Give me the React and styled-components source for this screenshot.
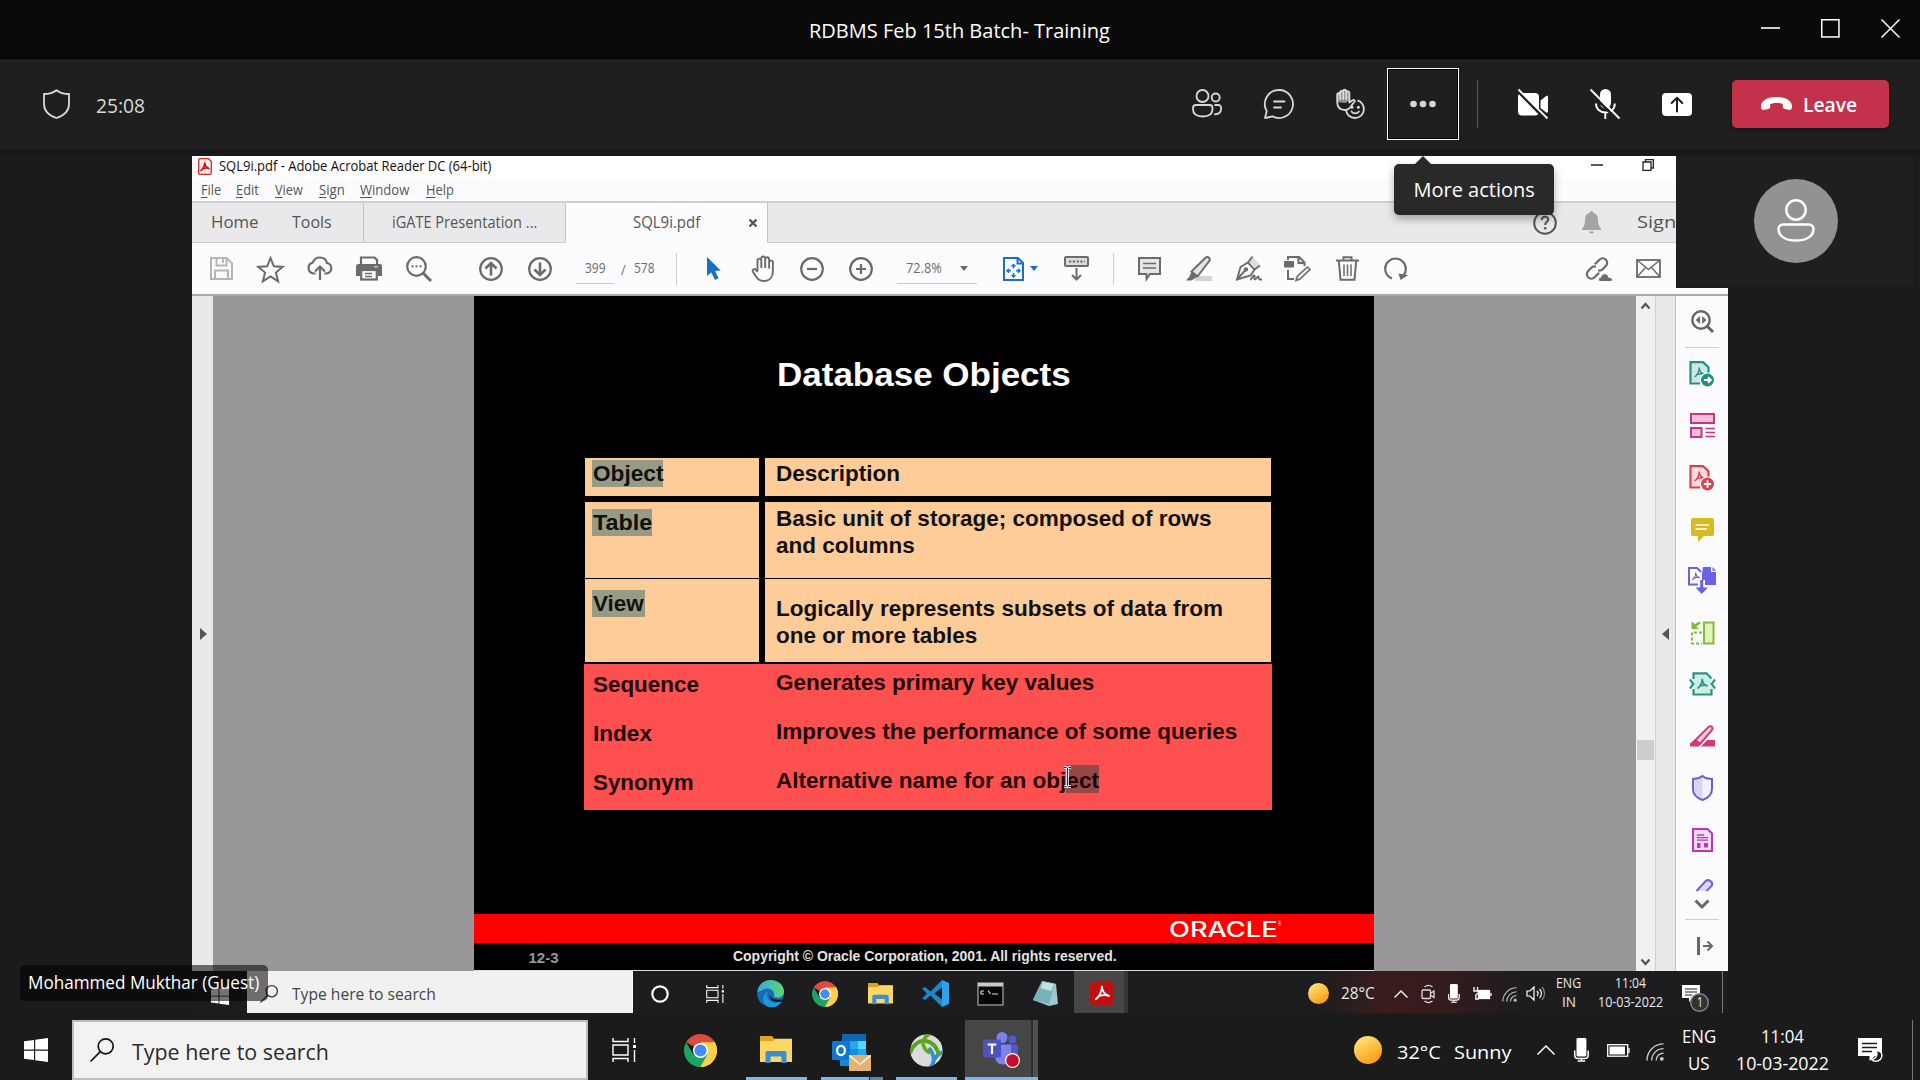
import React, { useLayoutEffect, useRef, useState } from "react";
import styled, { createGlobalStyle, css } from "styled-components";

const UI = '"Open Sans", "Noto Sans", sans-serif';
const ARIAL = '"Liberation Sans", Arial, sans-serif';

const Global = createGlobalStyle`
  * { box-sizing: border-box; }
  html, body { margin: 0; background: #1b1b1b; overflow: hidden; }
  body { font-family: ${UI}; color: #fff; }
  svg { display: block; flex: none; overflow: visible; }
`;

/* ---------- text ---------- */

const Label = styled.span`
  display: block;
  flex: none;
  width: ${(p) => p.$w}px;
  font-family: ${(p) => p.$font || UI};
  font-size: ${(p) => p.$size}px;
  font-weight: ${(p) => p.$weight || 400};
  line-height: ${(p) => (p.$lh ? `${p.$lh}px` : 1.2)};
  color: ${(p) => p.$color || "inherit"};
  white-space: pre;
  margin-left: ${(p) => p.$ml || 0}px;
  margin-top: ${(p) => p.$mt || 0}px;
`;
const LabelInner = styled.span`
  display: inline-block;
  transform-origin: 0 50%;
  u { text-decoration-thickness: 1px; text-underline-offset: 2px; }
`;

function Text({ w, size, weight, color, font, lh, ml, mt, children }) {
  const ref = useRef(null);
  const [scale, setScale] = useState(1);
  useLayoutEffect(() => {
    const natural = ref.current.offsetWidth;
    if (natural) setScale(w / natural);
  }, [w, size]);
  return (
    <Label $w={w} $size={size} $weight={weight} $color={color} $font={font} $lh={lh} $ml={ml} $mt={mt}>
      <LabelInner ref={ref} style={{ transform: `scaleX(${scale})` }}>{children}</LabelInner>
    </Label>
  );
}

/* ---------- icons ---------- */

const Svg = ({ w, h, vb, sw = 1.5, children, ...rest }) => (
  <svg width={w} height={h} viewBox={vb || `0 0 ${w} ${h}`} fill="none" stroke="currentColor" strokeWidth={sw} {...rest}>
    {children}
  </svg>
);

const Shield = () => (
  <Svg w={27} h={30} sw={1.8}>
    <path d="M13.5 1.2C10 4 5.5 5 1 5v10c0 7 5 11.500 12.500 14 7.500-2.500 12.500-7 12.500-14V5C21.500 5 17 4 13.500 1.200Z" strokeLinejoin="round" />
  </Svg>
);
const People = () => (
  <Svg w={30} h={30} sw={1.8}>
    <circle cx="10.500" cy="7" r="6" /><circle cx="23.700" cy="8.500" r="4" />
    <path d="M4 16h13.500a3 3 0 0 1 3 3v1c0 5-4 7.500-9.700 7.500S1 25 1 20v-1a3 3 0 0 1 3-3Z" />
    <path d="M22.500 16h4a2.600 2.600 0 0 1 2.600 2.600v1.200c0 3.800-2.600 5.700-7 5.600" />
  </Svg>
);
const Chat = () => (
  <Svg w={30} h={30} sw={1.8}>
    <path d="M15 1a14 14 0 1 1-6.500 26.400L1.100 29l1.600-7A14 14 0 0 1 15 1Z" strokeLinejoin="round" />
    <path d="M10 12.500h10.500M10 18.500h7" strokeLinecap="round" />
  </Svg>
);
const Reactions = () => (
  <Svg w={30} h={30} sw={1.8}>
    <path d="M1.200 13V6.500a1.500 1.500 0 0 1 3-3 1.500 1.500 0 0 1 3-1.300 1.500 1.500 0 0 1 3 0 1.500 1.500 0 0 1 3 1.800v8L9 14Z" fill="#8f8f8f" stroke="none" />
    <path d="M1.200 13V6a1.500 1.500 0 0 1 3 0V10M4.200 8V3.500a1.500 1.500 0 0 1 3 0V10M7.200 8V2.200a1.500 1.500 0 0 1 3 0V10M10.200 4a1.500 1.500 0 0 1 3.200 0v9.500l3.300-2.300c1.200-.6 2.600.4 2 1.400-3.200 2.400-3.700 8.400-9.500 8.400-5 0-8-3-8-8" strokeLinecap="round" strokeLinejoin="round" />
    <path d="M21.500 11.400a9 9 0 1 1-11.500 9.800" />
    <path d="M15.500 22.500c1.800 2.600 5.600 2.600 7.400 0" strokeLinecap="round" />
    <g fill="currentColor" stroke="none"><circle cx="16" cy="18.300" r="1.500" /><circle cx="22.400" cy="18.300" r="1.500" /></g>
  </Svg>
);
const Dots = () => (
  <Svg w={26} h={8} stroke="none"><g fill="#d6d6d6"><circle cx="3.500" cy="4" r="3.300" /><circle cx="13" cy="4" r="3.300" /><circle cx="22.500" cy="4" r="3.300" /></g></Svg>
);
const CameraOff = () => (
  <Svg w={30} h={30} stroke="none">
    <path fill="#fff" d="M4 4h13a4 4 0 0 1 4 4v14.500a4 4 0 0 1-4 4H4a4 4 0 0 1-4-4V8a4 4 0 0 1 4-4ZM22.500 11.500l5.700-4.500c.8-.6 1.800-.2 1.800.8v14.800c0 1-1 1.400-1.800.8l-5.700-4.500Z" />
    <path d="M-1 1.500 28 31" stroke="#1f1f1f" strokeWidth="2.500" /><path d="M.5.500 29.500 29.500" stroke="#fff" strokeWidth="1.900" />
  </Svg>
);
const MicOff = () => (
  <Svg w={30} h={30} stroke="none">
    <rect x="10" y="0" width="11" height="19.500" rx="5.500" fill="#fff" />
    <path d="M6 14.500c0 5.500 4 9 9.500 9s9.300-3.500 9.300-9M15.300 23.500V30" stroke="#fff" strokeWidth="1.900" />
    <path d="M-1 2.500 27.500 31" stroke="#1f1f1f" strokeWidth="2.500" /><path d="M.5.500 29.500 29.500" stroke="#fff" strokeWidth="1.900" />
  </Svg>
);
const Share = () => (
  <Svg w={30} h={23} stroke="none">
    <rect width="30" height="23" rx="4" fill="#fff" />
    <path d="M15 18.500V5M9.700 10 15 4.800 20.300 10" stroke="#1f1f1f" strokeWidth="2" strokeLinecap="round" strokeLinejoin="round" />
  </Svg>
);
const Hangup = () => (
  <Svg w={31} h={14} stroke="none">
    <path fill="#fff" d="M15.500 0C23.500 0 31 3.200 31 9.200c0 3.400-1.500 4-3.500 3.600l-3.700-.8c-1.400-.3-2-1.200-2-2.500V7c-3.500-1.500-9-1.500-12.600 0v2.500c0 1.300-.6 2.200-2 2.500l-3.700.8C1.500 13.200 0 12.600 0 9.200 0 3.200 7.500 0 15.500 0Z" />
  </Svg>
);
const WinMin = () => <Svg w={19} h={19} sw={1.600}><path d="M0 9h19" /></Svg>;
const WinMax = () => <Svg w={19} h={19} sw={1.500}><rect x=".75" y=".75" width="17.200" height="17.200" /></Svg>;
const WinClose = () => <Svg w={19} h={19} sw={1.500}><path d="m.5.500 18 18M18.500.500l-18 18" /></Svg>;

const AcroMark = ({ x = 0, y = 0, s = 1, c = "currentColor", sw = 1.500 }) => (
  <path transform={`translate(${x} ${y}) scale(${s})`} stroke={c} strokeWidth={sw} fill="none" strokeLinejoin="round" strokeLinecap="round"
    d="M5 .5C4.700 4 3.500 7.500.5 9.500M5 .5c.2 3 1.600 5.500 5 6.500M2.500 7.300C5 6.400 7.500 6.200 10 7" />
);

const Save = () => (
  <Svg w={23} h={23} stroke="#b5b5b5" sw={2}><path d="M1 1h15.500L22 6.500V22H1Z" /><path d="M6.500 1v7.500h10V1M13 2v4M5 22v-8.500h13V22" /></Svg>
);
const Star = () => <Svg w={27} h={26} sw={2}><path d="m13.500 2 3.300 8.300 8.900.6-6.800 5.700 2.200 8.700-7.600-4.800-7.600 4.800 2.200-8.700L1.300 10.900l8.900-.6Z" /></Svg>;
const CloudUp = () => (
  <Svg w={26} h={25} sw={2.200}><path d="M8.500 17.500H6.800a5.600 5.600 0 0 1-1-11C7 3.200 9.700 1.500 12.800 1.500c3.600 0 6.400 2.200 7.200 5.500a5.300 5.300 0 0 1-.7 10.500h-2" /><path d="M13 24V11M8 15.500l5-5 5 5" /></Svg>
);
const Print = () => (
  <Svg w={26} h={25} stroke="none">
    <path d="M5 8V1.500h13.500L21 4v4" stroke="currentColor" strokeWidth="2.200" /><path fill="currentColor" d="M2.500 8h21A2.500 2.500 0 0 1 26 10.500V20h-4v-5H4v5H0v-9.500A2.500 2.500 0 0 1 2.500 8Z" />
    <rect x="5.200" y="14" width="15.600" height="9.500" stroke="currentColor" strokeWidth="2.200" fill="#fff" /><path d="M9 17.500h7M9 20.500h7" stroke="currentColor" strokeWidth="1.300" /><path d="M18 10.800h4" stroke="#ddd" strokeWidth="1.200" />
  </Svg>
);
const Find = () => (
  <Svg w={26} h={26} sw={2.200}><circle cx="10.500" cy="10.500" r="9.300" /><path d="m17 17 8 8" strokeWidth="3" /><path d="M5.500 10.200h10" strokeDasharray="2 2" strokeWidth="2" /></Svg>
);
const RoundArrow = ({ down }) => (
  <Svg w={24} h={24} sw={2.200}><circle cx="12" cy="12" r="10.800" /><path d={down ? "M12 5.500V18M6.500 12.500l5.500 5.500 5.500-5.500" : "M12 18.500V6M6.500 11.500 12 6l5.500 5.500"} strokeWidth="2.600" /></Svg>
);
const Pointer = () => <Svg w={14} h={23} stroke="none"><path fill="#1b6fc4" d="M0 0v19l4.300-3.600L8 23l3.600-1.700-3.500-7.200 5.600-.6Z" /></Svg>;
const Hand = () => (
  <Svg w={25} h={27} sw={1.900}>
    <path d="M6.500 16V5.500a1.900 1.900 0 0 1 3.800 0V13m0-9.500a1.900 1.900 0 0 1 3.900 0V13m0-8.800a1.900 1.900 0 0 1 3.900 0V13.500m0-6a1.900 1.900 0 0 1 3.800 0V16c0 6-3 10-8.700 10-6 0-7.200-3-11-8.800-1.600-2.400.9-4.300 2.800-2.300L6.500 17" strokeLinejoin="round" />
  </Svg>
);
const Zoom = ({ plus }) => <Svg w={24} h={24} sw={2.200}><circle cx="12" cy="12" r="10.800" /><path d={plus ? "M7 12h10M12 7v10" : "M7 12h10"} /></Svg>;
const FitPage = () => (
  <Svg w={21} h={24} stroke="#1b6fc4" sw={2}><path d="M1 1h14l5 5v17H1Z" /><path d="M14.500 1v5.500H20" /><path d="M10.500 7.500v4M8.500 9.500l2-2 2 2M10.500 20v-4M8.500 18l2 2 2-2M4 13.700h4M6 11.700l-2 2 2 2M17 13.700h-4M15 11.700l2 2-2 2" strokeWidth="1.400" /></Svg>
);
const Caret = ({ c = "currentColor" }) => <Svg w={8} h={5} stroke="none"><path fill={c} d="M0 0h8L4 5Z" /></Svg>;
const ScrollDown = () => (
  <Svg w={25} h={25} sw={2}><rect x="1" y="1" width="23" height="9" rx="1" fill="#ddd" /><path d="M5 5.500h16" strokeDasharray="2.200 1.600" /><path d="M12.500 12v11.500M8 19l4.500 4.500L17 19" /></Svg>
);
const Comment = () => <Svg w={23} h={24} sw={2}><path d="M1 1h21v16h-10l-3.500 5v-5H1Z" fill="#e6e6e6" /><path d="M5 6.500h13M5 11h13" strokeWidth="1.500" /></Svg>;
const Highlight = () => (
  <Svg w={26} h={25} sw={1.900}><path d="M10 20h16v5H8Z" fill="#d4d4d4" stroke="none" /><path d="M5.500 15.500 19.500 1.800c1-1 2.500-1 3.500-.1s1 2.300.2 3.400L11.500 20.500Z" fill="#e4e4e4" /><path d="M5.500 15.500 3.500 20.500 0 24.500h5.500l6-4Z" fill="currentColor" stroke="none" /></Svg>
);
const Sign = () => (
  <Svg w={26} h={25} sw={1.900}><path d="M13 5.500 17 1l6.500 7.500-4 3.500Z" fill="#ddd" stroke="none" /><path d="M1 23.500 4.500 11l7.500-4.500 6.500 7-4 6Z" /><path d="M1 23.500 9 14.500" /><circle cx="10" cy="13.500" r="1.200" fill="currentColor" /><path d="M12 6.500 16.500 .5M18.500 13.500l5.500-4" /><path d="M14 23.500c2 0 2.500-4 4-4s-.5 4 1 4 2-3 3.200-3 0 3 1.300 3h2.500" /></Svg>
);
const EditDoc = () => (
  <Svg w={27} h={26} sw={2}><path d="M4 4V1h11l5.500 5.500V10M14.500 1v6h6M4 14v9h6" /><rect x="0" y="5" width="10" height="6.500" fill="currentColor" stroke="none" /><path d="m12 24.500 1.500-4.500L23.500 11l2.500 2.500L16 23Z" fill="#eee" strokeWidth="1.600" /></Svg>
);
const Trash = () => (
  <Svg w={23} h={25} sw={2}><path d="M0 4.500h23M7.500 4V1.200h8V4M2.800 4.500 4.500 23.800h14L20.200 4.500" /><path d="M8 8.500v11.500M11.500 8.500v11.500M15 8.500v11.500" strokeWidth="1.500" /></Svg>
);
const Rotate = () => <Svg w={25} h={23} sw={2.200}><path d="M8 21.500C3.500 19.500 1.200 16 1.200 11.800a10.300 10.300 0 0 1 20.600 0c0 2.500-.8 4.700-2 6.200" /><path d="m14.500 16.500 10 1.500-8 5Z" fill="currentColor" stroke="none" /></Svg>;
const Link = () => (
  <Svg w={27} h={26} sw={2.200}><g transform="translate(11 12.500) rotate(-45)"><path d="M1.500 -4.500H8a4.500 4.500 0 0 1 0 9H3.500A4.500 4.500 0 0 1 -.5 2" /><path d="M-1.500 4.500H-8a4.500 4.500 0 0 1 0-9H-3.500A4.500 4.500 0 0 1 .5-2" /></g><path d="M14.500 25.500c-3-.5-2.500-4 .2-4.300 1-4.700 7.300-4.400 8 0 4.500 0 4.500 4 2 4.300Z" fill="currentColor" stroke="#fcfcfe" strokeWidth="1" /></Svg>
);
const Mail = () => <Svg w={25} h={19} sw={1.800}><rect x="1" y="1" width="23" height="17" /><path d="m1 1 11.500 9.500L24 1M1 18l8.500-9.500M24 18l-8.500-9.500" strokeWidth="1.400" /></Svg>;
const Help = () => (
  <Svg w={24} h={24} sw={2}><circle cx="12" cy="12" r="10.800" /><path d="M8.800 9c.2-4.500 6.700-4 6.400-.3-.2 2.200-3 2.300-3 5.300" /><circle cx="12.200" cy="17.200" r="1.300" fill="currentColor" stroke="none" /></Svg>
);
const Bell = () => <Svg w={19} h={23} stroke="none"><path fill="#a3a3a3" d="M9.500 0c1 0 1.500.7 1.500 1.600 3.300.8 5 3.500 5 7 0 4.600.8 6.900 3 9.200v1.200H0v-1.200c2.200-2.300 3-4.600 3-9.200 0-3.500 1.700-6.200 5-7C8 .7 8.500 0 9.500 0ZM7 20.500h5c-.3 2.700-4.700 2.700-5 0Z" /></Svg>;
const TriLeft = () => <Svg w={7} h={12} stroke="none"><path fill="#555" d="M7 0v12L0 6Z" /></Svg>;
const TriRight = () => <Svg w={7} h={12} stroke="none"><path fill="#555" d="M0 0v12l7-6Z" /></Svg>;
const Chevron = ({ w = 9, h = 6, up, sw = 2.200 }) => <Svg w={w} h={h} sw={sw}><path d={up ? `M.5 ${h - 0.5} ${w / 2} 1 ${w - 0.5} ${h - 0.5}` : `M.5 .5 ${w / 2} ${h - 1} ${w - 0.5} .5`} /></Svg>;

const RailFind = () => (
  <Svg w={23} h={23} stroke="#666" sw={2.400}><circle cx="10" cy="10" r="8.700" /><path d="m16 16 6 6" strokeWidth="3" /><path d="M9 6v8L4.800 10ZM11.200 6v8l4.200-4Z" fill="#666" stroke="none" /></Svg>
);
const DocBadge = ({ c, fill, plus }) => (
  <Svg w={26} h={26} stroke={c} sw={2.200}>
    <path d="M1.500 22.500V1.200H14l5.500 5v14l-8 2.300Z" fill={fill} stroke="none" /><path d="M11 22.500H1.500V1.200H14l5.500 5V12" /><AcroMark x={5.500} y={6.500} s={0.95} c={c} />
    <circle cx="18.500" cy="19" r="7.500" fill="#fff" stroke="none" /><circle cx="18.500" cy="19" r="6.500" fill={c} stroke="none" />
    <path d={plus ? "M14.800 19h7.400M18.500 15.300v7.400" : "M15 19h6.500M19 16.200l2.800 2.800L19 21.800"} stroke="#fff" strokeWidth="2" />
  </Svg>
);
const Organize = () => (
  <Svg w={25} h={25} stroke="#c43487" sw={2}><rect x="1" y="1" width="23" height="9" fill="#f3bfdc" /><rect x="1" y="15" width="10.500" height="9" fill="#f3bfdc" /><path d="M15.500 15.500H25M15.500 19.500H25M15.500 23.500H25" strokeWidth="1.300" /></Svg>
);
const RailComment = () => <Svg w={23} h={24} stroke="none"><path fill="#d5bb1f" d="M2 0h19a2 2 0 0 1 2 2v14a2 2 0 0 1-2 2h-8l-6 6v-6H2a2 2 0 0 1-2-2V2a2 2 0 0 1 2-2Z" /><path d="M4.500 7H18M4.500 11H16" stroke="#fff" strokeWidth="1.700" /></Svg>;
const Combine = () => (
  <Svg w={28} h={27} stroke="#6a5fdc" sw={2}><path d="M10 17.500H1V1h8l4 4" fill="#fff" /><AcroMark x={4} y={5.500} s={0.75} c="#6a5fdc" /><path d="M15 0h8v5h5v13H17v-5h-3V7Z" fill="#6762e6" stroke="none" /><path d="M24.500 0v3.800H28Z" fill="#6762e6" stroke="none" /><path d="M13.700 13v8" strokeWidth="3" /><path d="M7.500 20.500h12.500L13.700 27Z" fill="#6a5fdc" stroke="none" /></Svg>
);
const Compare = () => (
  <Svg w={25} h={25} stroke="#83bd35" sw={2}><rect x="14" y="2.500" width="9.500" height="21" fill="#dff2bd" /><path d="M12 12.500H2V23.500h10" strokeDasharray="3 2" /><path d="M1.500 1.500v7.500H9L6.500 6.500l4.500-3.500L9 1.500 5 4Z" fill="#83bd35" stroke="none" /></Svg>
);
const Compress = () => (
  <Svg w={27} h={24} stroke="#2b9383" sw={2.200}><path d="M5 2h12l5 4.500V22H5Z" fill="#cdeee7" stroke="none" /><path d="M4.500 7V1.300h13L22.500 6.500M4.500 17v5.500h18V17M1 7.500 4.300 12 1 16.500M26 7.500 22.700 12l3.300 4.500" /><AcroMark x={8.500} y={7} s={0.95} c="#2b9383" sw={1.800} /></Svg>
);
const Redact = () => (
  <Svg w={25} h={22} stroke="#cf3a78" sw={2}><path d="M5.500 15 18.500 2c2.500-2 5 .5 3.500 3L10 19Z" fill="#f9d5e3" /><path d="M0 21.500v-3l4.500-4 6 5-1.500 2ZM11 21.500 17 15h8v6.500Z" fill="#cf3a78" stroke="none" /></Svg>
);
const RailShield = () => (
  <Svg w={21} h={26} stroke="#6a5fd6" sw={2}><path d="M10.500 1C8 3 4.500 4 1 4v10c0 5.500 4 9 9.500 11 5.500-2 9.500-5.500 9.500-11V4C16.500 4 13 3 10.500 1Z" fill="#f3f2fc" /><path d="M10.500 3C8 4.500 5 5 2.300 5.200V14c0 4.500 3.200 7.500 8.200 9.500Z" fill="#d8d6ee" stroke="none" /></Svg>
);
const Prepare = () => (
  <Svg w={21} h={24} stroke="#b338b8" sw={2}><path d="M1 1h14.500L20 5.500V23H1Z" fill="#f5dcf5" /><path d="M5 7h7M5 9.700h11M5 12.200h11" strokeWidth="1.300" /><path d="M5 15h3.500v5H5ZM12 15h4v4.500h-4Z" fill="#b338b8" stroke="none" /></Svg>
);
const PenTop = () => <Svg w={18} h={12} stroke="#7166cf" sw={2}><path d="M1.500 12 10.500 2.200c2.500-2.500 8 .3 6.500 4.300L11.500 12" fill="#d9d6f5" /></Svg>;
const Expand = () => <Svg w={16} h={18} stroke="#666" sw={2}><path d="M1.500 0v18" strokeWidth="3" /><path d="M6 9h9M10.500 4.500 15 9l-4.500 4.500" /></Svg>;

const AcroApp = () => <Svg w={14} h={17} stroke="#d3292f" sw={1.300}><path d="M2 .7h8.500L13.300 3.500V15a1.300 1.300 0 0 1-1.300 1.300H2A1.300 1.300 0 0 1 .7 15V2A1.300 1.300 0 0 1 2 .7Z" fill="#fdeeee" /><AcroMark x={2.500} y={4.500} s={0.85} c="#c11" sw={1.900} /></Svg>;
const Winlogo = ({ s }) => <Svg w={s} h={s} vb="0 0 24 24" stroke="none"><path fill="#fff" d="M0 3.300 10 2v9.500H0ZM11.200 1.800 24 0v11.500H11.200ZM0 12.700h10V22L0 20.700ZM11.200 12.700H24V24l-12.800-1.800Z" /></Svg>;
const SearchGlyph = ({ s, c }) => <Svg w={s} h={s} vb="0 0 24 24" stroke={c} sw={1.700}><circle cx="15.700" cy="8.300" r="7.500" /><path d="M10.300 13.700.5 23.500" /></Svg>;
const TaskView = ({ s }) => <Svg w={s} h={s} vb="0 0 24 24" stroke="#fff" sw={1.400}><path d="M1 0v3.500h15V0M1 24v-3.500h15V24M1 7h15v10H1ZM22.500 0v5M22.500 12v12" /><path d="M21 7h3v3h-3Z" fill="#fff" stroke="none" /></Svg>;
const Chrome = ({ s }) => (
  <Svg w={s} h={s} vb="0 0 34 34" stroke="none">
    <path fill="#dd4b3e" d="M17 17 2.300 8.500a17 17 0 0 1 29.400 0Z" /><path fill="#fdd04b" d="M17 17V8.500h14.700A17 17 0 0 1 17 34Z" /><path fill="#1da362" d="M17 17 9.600 21.200 2.300 8.500A17 17 0 0 0 17 34l7.300-12.700Z" />
    <path fill="#fdd04b" d="M17 34 24.300 21.200 24 13 30 8.500h1.700A17 17 0 0 1 17 34Z" /><circle cx="17" cy="17" r="7.800" fill="#fff" /><circle cx="17" cy="17" r="6.200" fill="#4a89f3" />
  </Svg>
);
const Folder = ({ s }) => (
  <Svg w={s} h={s * 0.85} vb="0 0 32 27" stroke="none"><path fill="#e3a11b" d="M0 0h12l2.500 3H30v6H0Z" /><path fill="#fdd663" d="M0 5h13l2-2.300h17V26H0Z" /><path fill="#3b8ed0" d="M5.500 27V17a2 2 0 0 1 2-2h17a2 2 0 0 1 2 2v10h-5v-6.500h-11V27Z" /></Svg>
);
const Outlook = () => (
  <Svg w={39} h={38} stroke="none"><rect x="10" y="0" width="24" height="9" fill="#1066b5" /><rect x="10" y="7" width="8" height="9" fill="#1490df" /><rect x="18" y="7" width="8" height="9" fill="#28a8ea" /><rect x="26" y="7" width="8" height="9" fill="#50d9ff" /><rect x="10" y="15" width="8" height="9" fill="#0a4f94" /><rect x="18" y="15" width="8" height="9" fill="#1490df" /><rect x="26" y="15" width="8" height="9" fill="#28a8ea" /><path d="M8 32V20l12 7 15-8v10l-3 3Z" fill="#1589d8" />
    <rect x="0" y="7" width="18" height="19" rx="1.500" fill="#0f78d4" /><ellipse cx="9" cy="16.500" rx="3.900" ry="4.600" stroke="#fff" strokeWidth="2.300" />
    <rect x="17" y="21" width="22" height="16" fill="#e6b272" /><path d="m17.500 21.500 10.500 9 10.500-9" stroke="#fff" strokeWidth="1.300" /></Svg>
);
const Globe = () => (
  <Svg w={33} h={33} stroke="none">
    <defs><clipPath id="globeClip"><circle cx="16.500" cy="16.500" r="16.300" /></clipPath></defs>
    <g clipPath="url(#globeClip)">
      <circle cx="16.500" cy="16.500" r="16.300" fill="#d9dcdd" />
      <path d="M20 34C25 29 25 22 19 14M34 18c-5 1-8 4-10 8" stroke="#2f92cf" strokeWidth="3.800" />
      <path d="M0 19C3 11 9 6 16 7c7 1 11 7 13 14" stroke="#55a51c" strokeWidth="4" />
      <path d="M22-1C13 2 11 9 15 15c1.500 2 3 3 5 4" stroke="#63a81d" strokeWidth="3.600" />
    </g>
  </Svg>
);
const TeamsIcon = () => (
  <Svg w={37} h={36} stroke="none"><circle cx="19" cy="5.500" r="5.500" fill="#7b83eb" /><circle cx="29.500" cy="7.500" r="4" fill="#5059c9" /><path d="M25 12.500h10v9a7 7 0 0 1-10 6Z" fill="#5059c9" /><path d="M12 12.500h16v11c0 6-3 9-8 9s-8-3-8-9Z" fill="#7b83eb" /><rect x="0" y="7.500" width="18" height="18" rx="1.500" fill="#4b53bc" /><path d="M4.700 12.500h8.600M9 12.500v9.500" stroke="#fff" strokeWidth="2.200" /><circle cx="29.500" cy="28.500" r="7.500" fill="#fff" /><circle cx="29.500" cy="28.500" r="6.300" fill="#c50f2f" /></Svg>
);
const Edge = () => (
  <Svg w={27} h={27} stroke="none"><defs><linearGradient id="eg" x1="0" y1="0" x2="1" y2="0"><stop offset="0" stopColor="#2fa8e0" /><stop offset="1" stopColor="#5cd96d" /></linearGradient></defs><circle cx="13.500" cy="13.500" r="13.400" fill="#1769be" /><path d="M.3 12C1.500 4 7 0 13.500 0 21 0 27 5 27 11.500c0 4-3 6-6.500 6-2.500 0-4-1-3.500-2.500.7-5-6-8-10.500-5.500C3.500 11 .5 12 .3 12Z" fill="url(#eg)" /><path d="M11 12c-4 8 5 13 14 9.500A13 13 0 0 1 12 27C5 25 4 14 11 12Z" fill="#1c9ade" /><path d="M13 13c-1 5 4 7.500 12.500 6.500l1 1.500c-8 3-16-.5-13.500-8Z" fill="#1d1d1f" /></Svg>
);
const VsCode = () => <Svg w={27} h={27} stroke="none"><path d="M20 0v27L8.500 15.500 3 20 0 18.500 5 13.500 0 8.500 3 7l5.500 4.500Z" fill="#1e86cc" /><path d="M20 7.500v12L12.500 13.500Z" fill="#1d1d1f" /><path d="M20 0 27 3v21l-7 3Z" fill="#2ea3ea" /></Svg>;
const Cmd = () => <Svg w={25} h={22} stroke="none"><rect width="25" height="22" fill="#070707" stroke="#8a8a8a" /><rect x="0" y="0" width="25" height="3.500" fill="#c9c9c9" /><path d="M3 8h3M3 8v3h3M8 8v0M8 11v0M10 7.500l2.500 3.500M14 11h6" stroke="#ddd" strokeWidth="1.200" /></Svg>;
const Notepad = () => <Svg w={25} h={25} stroke="none"><path d="M9 0 23 3l2 20-9 2L0 19Z" fill="#9fc9cd" /><path d="M9 0 22 2.500 16 23 0 19Z" fill="#79b3ba" /><path d="M10 1 21 3l-2.500 7-11-3Z" fill="#c3e0e2" /></Svg>;
const Acrobat = () => <Svg w={24} h={23} stroke="none"><rect width="24" height="23" rx="3" fill="#c00f10" /><AcroMark x={5} y={4} s={1.400} c="#fff" sw={1.300} /></Svg>;
const Sun = ({ s, id }) => <Svg w={s} h={s} vb="0 0 28 28" stroke="none"><defs><linearGradient id={id} x1=".2" y1="0" x2=".8" y2="1"><stop offset="0" stopColor="#ffe67a" /><stop offset="1" stopColor="#fb960a" /></linearGradient></defs><circle cx="14" cy="14" r="14" fill={`url(#${id})`} /></Svg>;
const Mic = ({ h }) => <Svg w={h * 0.62} h={h} vb="0 0 15 24" stroke="#fff"><rect x="2.500" y="0" width="10" height="18.500" rx="1.500" fill="#fff" stroke="none" /><path d="M.7 12.500v4.200C.7 19.500 2 20.500 4 20.500h7c2 0 3.300-1 3.300-3.800v-4.200M7.500 20.500V23M3.700 23.200h7.600" /></Svg>;
const Battery = () => <Svg w={23} h={13} stroke="#fff" sw={1.300}><rect x=".7" y=".7" width="20" height="11.500" /><path d="M22 4v5" /><rect x="2.500" y="2.500" width="15.500" height="8" fill="#fff" stroke="none" /></Svg>;
const BatteryPlug = () => <Svg w={18} h={14} stroke="#fff" sw={1.300}><rect x="5.500" y="3.500" width="11" height="8" fill="#fff" /><path d="M18 6v3M1 0v3.500M4.500 0v3.500M.3 4h5v2L2.800 8V12h3" /></Svg>;
const Wifi = ({ s, c = "#fff" }) => <Svg w={s} h={s} vb="0 0 19 19" stroke={c} sw={1.400}><path d="M1 18.500A17.500 17.500 0 0 1 18.500 1M6 18.500A12.500 12.500 0 0 1 18.500 6M10.700 18.500a7.800 7.800 0 0 1 7.800-7.800" /><circle cx="16.700" cy="16.700" r="2" fill={c} stroke="none" /></Svg>;
const Volume = () => <Svg w={19} h={15} stroke="#fff" sw={1.200}><path d="M1 5h3l4-4v13l-4-4H1ZM11 5c1.300 1.500 1.300 3.500 0 5M13.500 3c2.500 2.500 2.500 6.500 0 9" /><path d="M16 1c3.300 3.500 3.300 9.500 0 13" stroke="#888" /></Svg>;
const Meet = () => <Svg w={14} h={18} stroke="#ddd" sw={1.300}><rect x="1" y="5" width="8.500" height="8.500" rx="1" /><path d="m10 8 3-2v6.500l-3-2M3.500 2C6 0 9 0 11.500 2M3.500 16c2.500 2 5.500 2 8 0" /></Svg>;
const NotifMoon = () => <Svg w={25} h={24} stroke="none"><path d="M0 0h24v18h-7l-5.500 5v-5H0Z" fill="#fff" /><path d="M4 5.500h15M4 9.500h15M4 13.500h10" stroke="#1b1b1c" strokeWidth="1.300" /><path d="M18.500 12.500c4 0 6.500 3 5 7-1.500 4-7 5-10 2 5-.5 6.500-4.500 5-9Z" fill="#1b1b1c" stroke="#fff" strokeWidth="1.300" /></Svg>;
const NotifOne = () => <Svg w={27} h={27} stroke="none"><path d="M0 0h18v13l-7 0-4 4v-4H0Z" fill="#fff" /><path d="M3 4h12M3 7h12M3 10h7" stroke="#1d1d1f" strokeWidth="1.200" /><circle cx="17.500" cy="17.500" r="8.800" fill="#333" stroke="#888" strokeWidth="1.400" /></Svg>;
const Ibeam = () => <Svg w={9} h={22} sw={1}><path d="M1 1.500h2.500l1 1 1-1H8M4.500 2.500v17M1 20.500h2.500l1-1 1 1H8" stroke="#fff" strokeWidth="2.600" /><path d="M1 1.500h2.500l1 1 1-1H8M4.500 2.500v17M1 20.500h2.500l1-1 1 1H8" stroke="#333" /></Svg>;

/* ---------- meeting window ---------- */

const Screen = styled.main`
  width: 1920px; height: 1080px; display: flex; flex-direction: column; background: #1b1b1b; overflow: hidden;
`;
const TitleBar = styled.header`
  height: 59px; background: #0a0a0a; border-bottom: 1px solid #000; display: flex; align-items: flex-start; padding-top: 18px;
`;
const WindowButtons = styled.div`
  display: flex; gap: 41px; margin-left: 651px; padding-top: 1px; color: #fff;
`;
const MeetingBar = styled.nav`
  height: 90px; background: #1f1f1f; display: flex; align-items: center; padding-left: 42.500px; color: #d9d9d9;
`;
const MeetingActions = styled.div`
  display: flex; align-items: center; margin-left: 1026px;
`;
const ActionButton = styled.div`
  width: 72px; height: 72px; display: flex; align-items: center; justify-content: center;
  ${(p) => p.$focused && css`border: 1px solid #fff; box-shadow: inset 0 0 0 1px #000;`}
`;
const ActionDivider = styled.div`
  width: 1px; height: 48px; background: #555; margin: 0 19px 0 18px;
`;
const LeaveButton = styled.div`
  width: 157px; height: 48px; margin-left: 19px; border-radius: 5px; background: #c4314b; color: #fff;
  display: flex; align-items: center; padding-left: 29px; box-shadow: 0 2px 4px rgba(0, 0, 0, 0.3);
`;
const Stage = styled.section`
  position: relative; height: 871px; padding: 7px 0 0 192px; background: #1b1b1b;
  box-shadow: inset 0 7px 0 -1px #181818;
`;
const Tooltip = styled.div`
  position: absolute; left: 1394px; top: 15px; width: 160px; height: 51px; border-radius: 5px; background: #292929;
  display: flex; align-items: center; padding-left: 19.500px; box-shadow: 0 4px 8px rgba(0, 0, 0, 0.3);
  &::before { content: ""; position: absolute; left: 21px; top: -8px; border: 8px solid transparent; border-top: 0; border-bottom-color: #292929; }
`;
const ParticipantTile = styled.div`
  position: absolute; left: 1676px; top: 7px; width: 237px; height: 132px; background: #1f1f1f; border-bottom: 3px solid #1b1b1b;
  display: flex; padding: 22.500px 0 0 77.500px;
`;
const Avatar = styled.div`
  width: 84px; height: 84px; border-radius: 50%; background: #929292; color: #fff; display: flex; justify-content: center; padding-top: 20px;
`;
const NameTag = styled.div`
  position: absolute; left: 20px; top: 816px; width: 248px; height: 36px; border-radius: 5px; background: rgba(0, 0, 0, 0.55);
  display: flex; align-items: center; padding: 0 0 1px 7.500px;
`;

/* ---------- shared Acrobat window ---------- */

const Shared = styled.div`
  width: 1536px; height: 857px; display: flex; flex-direction: column; background: #fcfcfe; color: #555;
`;
const AppTitle = styled.div`
  height: 22px; display: flex; align-items: center; padding: 0 0 2px 5.500px; color: #111; background: #fff;
`;
const AppWindowButtons = styled.div`
  display: flex; align-items: center; gap: 39px; margin: -3px 0 0 1100.500px; color: #222;
`;
const MenuBar = styled.div`
  height: 23px; display: flex; align-items: center; padding-left: 9px;
`;
const TabStrip = styled.div`
  height: 42px; display: flex; background: #e9e9eb; border-top: 2px solid #cfcfd1; width: 1484px;
`;
const Tab = styled.div`
  width: ${(p) => p.$w}px; display: flex; align-items: center; padding-left: ${(p) => p.$pad}px; flex: none;
  border-right: 1px solid #c4c4c6; border-bottom: 1px solid ${(p) => (p.$active ? "#fcfcfe" : "#cbcbcd")};
  background: ${(p) => (p.$active ? "#fcfcfe" : "transparent")};
`;
const TabRest = styled.div`
  flex: 1; display: flex; align-items: center; border-bottom: 1px solid #cbcbcd; padding-left: 764.500px;
`;
const Tools = styled.div`
  height: 53px; display: flex; align-items: center; padding-left: 4.500px; color: #6b6b6b; border-bottom: 2px solid #a9a9ab;
`;
const ToolSlot = styled.div`
  width: 49.400px; height: 27px; flex: none; display: flex; align-items: center; justify-content: center; margin-left: ${(p) => p.$ml || 0}px;
`;
const ToolField = styled.div`
  width: ${(p) => p.$w}px; height: 31px; flex: none; display: flex; align-items: center; padding-left: 9px; border-bottom: 1px solid #c9c9cb; margin-left: 11px;
`;
const ToolDivider = styled.div`
  width: 1px; height: 32px; background: #cfcfd1; flex: none; margin-left: ${(p) => p.$ml}px;
`;
const Workspace = styled.div`
  height: 674px; flex: 1; display: flex; min-height: 0;
`;
const LeftPane = styled.div`
  width: 21px; background: #e9e9eb; display: flex; align-items: center; justify-content: center; padding-left: 1px;
`;
const Canvas = styled.div`
  width: 1423px; background: #999799; display: flex; padding-left: 260.500px;
`;
const ScrollBar = styled.div`
  width: 20px; background: #f1f1f3; border-right: 1px solid #cfcfd1; display: flex; flex-direction: column; align-items: center; color: #555; padding: 7px 0 6px;
`;
const ScrollThumb = styled.div`
  width: 17px; height: 19.500px; background: #cdcdcf; margin: 431px 1px auto 0;
`;
const RightPane = styled.div`
  width: 20px; background: #e9e9eb; border-right: 1px solid #c4c4c6; display: flex; align-items: center; justify-content: center;
`;
const Rail = styled.div`
  width: 52px; display: flex; flex-direction: column; align-items: center; color: #666; background: #fbfbfd;
`;
const RailSlot = styled.div`
  height: ${(p) => p.$h || 51.75}px; flex: none; display: flex; align-items: center; justify-content: center;
  padding-left: ${(p) => p.$pl || 0}px; padding-top: ${(p) => p.$pt || 0}px;
`;
const RailLine = styled.div`
  width: 34px; height: 1px; background: #cfcfd1; flex: none;
`;

/* ---------- slide ---------- */

const Slide = styled.article`
  width: 900px; background: #000; display: flex; flex-direction: column; border-bottom: 1px solid #ddd;
`;
const SlideTitle = styled.div`
  height: 162.300px; padding: 59px 0 0 303px; color: #fff;
`;
const ObjectTable = styled.div`
  width: 686.500px; margin-left: 111px; display: flex; flex-direction: column;
`;
const TableRow = styled.div`
  height: ${(p) => p.$h}px; display: flex; gap: 6px; margin-bottom: ${(p) => p.$gap}px; color: #111;
`;
const Cell = styled.div`
  background: #fdcc98; width: ${(p) => (p.$name ? 174 : 506.5)}px; padding: ${(p) => p.$top}px 0 0 ${(p) => (p.$name ? 7.5 : 11.4)}px;
`;
const Marked = styled.div`
  width: ${(p) => p.$w}px; height: 27px; background: #979b84; padding-left: 0.500px;
`;
const RedBlock = styled.div`
  width: 687.500px; height: 146px; margin-left: -0.500px; background: #ff5050; display: flex; color: #200606;
`;
const RedColumn = styled.div`
  width: ${(p) => (p.$name ? 183.5 : 500)}px; padding: ${(p) => p.$top}px 0 0 8.500px; display: flex; flex-direction: column; gap: 22px; position: relative;
`;
const Selection = styled.div`
  position: absolute; left: 298.500px; top: 101.500px; width: 33px; height: 28px; background: rgba(60, 65, 65, 0.55);
`;
const TextCursor = styled.div`
  position: absolute; left: 295px; top: 102px;
`;
const RedBand = styled.div`
  height: 29px; margin-top: 104.500px; background: #fe0000; display: flex; align-items: center; padding-left: 695px; color: #fff;
`;
const SlideFooter = styled.div`
  flex: 1; display: flex; padding-left: 54.500px;
`;

/* ---------- taskbars ---------- */

const InnerTaskbar = styled.div`
  height: 42px; flex: none; display: flex; align-items: center; color: #e8e8e8;
  background: linear-gradient(90deg, #1d1d1f 0 1130px, #3a1c1c 1190px, #351b1c 1250px, #1d1d1f 1330px);
`;
const InnerStart = styled.div`
  width: 55px; display: flex; justify-content: center; padding: 8px 0 0 0;
`;
const InnerSearch = styled.div`
  width: 386px; height: 42px; background: #f1f1f1; display: flex; align-items: center; padding: 3px 0 0 13px; color: #444; border-right: 1px solid #fff;
`;
const InnerApp = styled.div`
  width: 55px; height: 42px; flex: none; display: flex; align-items: center; justify-content: center; padding: 3px 1px 0 0;
  ${(p) => p.$active && css`width: 54px; margin-left: 1px; background: #474747; border-right: 4px solid #363636; padding: 3px 0 0 5px;`}
`;
const TwoLines = styled.div`
  display: flex; flex-direction: column; align-items: center; margin-left: ${(p) => p.$ml}px;
`;
const TrayItem = styled.div`
  margin-left: ${(p) => p.$ml}px; margin-top: ${(p) => p.$mt || 0}px; flex: none; position: relative;
`;
const NotifCount = styled.div`
  position: absolute; left: 14.500px; top: 8.500px;
`;
const EndLine = styled.div`
  width: 1px; height: 100%; background: #777; margin-left: ${(p) => p.$ml}px;
`;
const Taskbar = styled.footer`
  height: 60px; display: flex; align-items: center; background: #1b1b1c; color: #fff;
`;
const StartButton = styled.div`
  width: 72px; display: flex; justify-content: center;
`;
const SearchBox = styled.div`
  width: 516px; height: 60px; border: 2px solid #bdbdbd; background: #f2f2f2; display: flex; align-items: center; padding-left: 16px; color: #2b2b2b;
`;
const ViewButton = styled.div`
  width: 72px; display: flex; justify-content: center;
`;
const AppButton = styled.div`
  width: ${(p) => p.$w}px; height: 60px; flex: none; margin-left: ${(p) => p.$ml}px; display: flex; align-items: center; justify-content: center;
  border-bottom: 3px solid ${(p) => (p.$running ? "#76b9ed" : "transparent")};
  background: ${(p) => (p.$active ? "linear-gradient(90deg, #464646 66px, #2e2e2e 66px 68px, #505050 68px)" : "transparent")};
  padding: 3px 0 0 0;
`;
const StackedEdge = styled.div`
  align-self: flex-end; width: 13px; height: 3px; margin-left: 1px; background: #5d87a8;
`;

const MENU = [["F", "ile", 20.2, 0], ["E", "dit", 23, 15.2], ["V", "iew", 28, 15.5], ["S", "ign", 25.5, 16], ["W", "indow", 49.5, 16], ["H", "elp", 27.500, 16]];
const slide = { font: ARIAL, weight: 700, size: 22 };

export default function App() {
  return (
    <Screen>
      <Global />
      <TitleBar>
        <Text w={301} size={20} ml={809} lh={25}>RDBMS Feb 15th Batch- Training</Text>
        <WindowButtons><WinMin /><WinMax /><WinClose /></WindowButtons>
      </TitleBar>

      <MeetingBar>
        <Shield />
        <Text w={49} size={20} ml={26} mt={3}>25:08</Text>
        <MeetingActions>
          <ActionButton><People /></ActionButton>
          <ActionButton><Chat /></ActionButton>
          <ActionButton><Reactions /></ActionButton>
          <ActionButton $focused><Dots /></ActionButton>
          <ActionDivider />
          <ActionButton><CameraOff /></ActionButton>
          <ActionButton><MicOff /></ActionButton>
          <ActionButton><Share /></ActionButton>
        </MeetingActions>
        <LeaveButton><Hangup /><Text w={54} size={20} weight={600} ml={11} mt={2}>Leave</Text></LeaveButton>
      </MeetingBar>

      <Stage>
        <Shared>
          <AppTitle>
            <AcroApp />
            <Text w={272} size={14.5} ml={7} mt={-1}>SQL9i.pdf - Adobe Acrobat Reader DC (64-bit)</Text>
            <AppWindowButtons>
              <Svg w={12} h={2} sw={1.500}><path d="M0 1h12" /></Svg>
              <Svg w={12} h={12} sw={1.300}><path d="M1 3h8v8.300H1ZM3.500 3V.7h7.800V9H9" /></Svg>
            </AppWindowButtons>
          </AppTitle>
          <MenuBar>
            {MENU.map(([first, rest, w, ml]) => (
              <Text key={first} w={w} size={14.5} ml={ml} color="#555"><u>{first}</u>{rest}</Text>
            ))}
          </MenuBar>
          <TabStrip>
            <Tab $w={172} $pad={18.5}><Text w={47.5} size={17}>Home</Text><Text w={39.5} size={17} ml={33.5}>Tools</Text></Tab>
            <Tab $w={202} $pad={27.5}><Text w={145.5} size={15.5}>iGATE Presentation ...</Text></Tab>
            <Tab $w={202} $pad={67} $active>
              <Text w={67.5} size={15.5}>SQL9i.pdf</Text>
              <TrayItem $ml={48}><Svg w={8} h={8} sw={2.400}><path d="m.5.500 7 7M7.500.500l-7 7" /></Svg></TrayItem>
            </Tab>
            <TabRest>
              <Help />
              <TrayItem $ml={25}><Bell /></TrayItem>
              <Text w={39} size={17} ml={36}>Sign</Text>
            </TabRest>
          </TabStrip>
          <Tools>
            <ToolSlot><Save /></ToolSlot>
            <ToolSlot><Star /></ToolSlot>
            <ToolSlot><CloudUp /></ToolSlot>
            <ToolSlot $ml={-0.500}><Print /></ToolSlot>
            <ToolSlot $ml={0.700}><Find /></ToolSlot>
            <ToolSlot $ml={22.300}><RoundArrow /></ToolSlot>
            <ToolSlot><RoundArrow down /></ToolSlot>
            <ToolField $w={38}><Text w={20.5} size={14}>399</Text></ToolField>
            <Text w={5} size={15} ml={7}>/</Text>
            <Text w={20.5} size={14} ml={8}>578</Text>
            <ToolDivider $ml={21.500} />
            <ToolSlot $ml={12.500}><Pointer /></ToolSlot>
            <ToolSlot><Hand /></ToolSlot>
            <ToolSlot $ml={-0.700}><Zoom /></ToolSlot>
            <ToolSlot><Zoom plus /></ToolSlot>
            <ToolField $w={80}><Text w={35.5} size={14}>72.8%</Text><TrayItem $ml={18}><Caret /></TrayItem></ToolField>
            <TrayItem $ml={25.5}><FitPage /></TrayItem>
            <TrayItem $ml={6}><Caret c="#1b6fc4" /></TrayItem>
            <TrayItem $ml={26}><ScrollDown /></TrayItem>
            <ToolDivider $ml={24} />
            <ToolSlot $ml={11.500}><Comment /></ToolSlot>
            <ToolSlot><Highlight /></ToolSlot>
            <ToolSlot><Sign /></ToolSlot>
            <ToolSlot><EditDoc /></ToolSlot>
            <ToolSlot><Trash /></ToolSlot>
            <ToolSlot><Rotate /></ToolSlot>
            <ToolSlot $ml={153}><Link /></ToolSlot>
            <ToolSlot><Mail /></ToolSlot>
          </Tools>

          <Workspace>
            <LeftPane><TriRight /></LeftPane>
            <Canvas>
              <Slide>
                <SlideTitle><Text font={ARIAL} weight={700} w={293.5} size={33.5} lh={40}>Database Objects</Text></SlideTitle>
                <ObjectTable>
                  <TableRow $h={37.4} $gap={6.8}>
                    <Cell $name $top={1.5}><Marked $w={71}><Text {...slide} w={70} lh={27}>Object</Text></Marked></Cell>
                    <Cell $top={1.5}><Text {...slide} w={124} lh={27}>Description</Text></Cell>
                  </TableRow>
                  <TableRow $h={75.5} $gap={1}>
                    <Cell $name $top={6.8}><Marked $w={60}><Text {...slide} w={59.5} lh={27}>Table</Text></Marked></Cell>
                    <Cell $top={2.5}>
                      <Text {...slide} w={435} lh={27}>Basic unit of storage; composed of rows</Text>
                      <Text {...slide} w={139} lh={27}>and columns</Text>
                    </Cell>
                  </TableRow>
                  <TableRow $h={83} $gap={2}>
                    <Cell $name $top={11}><Marked $w={52.500}><Text {...slide} w={51} lh={27}>View</Text></Marked></Cell>
                    <Cell $top={15.8}>
                      <Text {...slide} w={446.5} lh={27}>Logically represents subsets of data from</Text>
                      <Text {...slide} w={201.5} lh={27}>one or more tables</Text>
                    </Cell>
                  </TableRow>
                  <RedBlock>
                    <RedColumn $name $top={6.7}>
                      <Text {...slide} w={106} lh={27}>Sequence</Text>
                      <Text {...slide} w={58.5} lh={27}>Index</Text>
                      <Text {...slide} w={100.5} lh={27}>Synonym</Text>
                    </RedColumn>
                    <RedColumn $top={5.3}>
                      <Selection />
                      <Text {...slide} w={318.5} lh={27}>Generates primary key values</Text>
                      <Text {...slide} w={461} lh={27}>Improves the performance of some queries</Text>
                      <Text {...slide} w={322.5} lh={27}>Alternative name for an object</Text>
                      <TextCursor><Ibeam /></TextCursor>
                    </RedColumn>
                  </RedBlock>
                </ObjectTable>
                <RedBand>
                  <Text font='Inter, "Liberation Sans", sans-serif' weight={500} w={109} size={21} mt={1}>ORACLE</Text>
                  <Text font={ARIAL} w={3} size={7} mt={-10}>®</Text>
                </RedBand>
                <SlideFooter>
                  <Text font={ARIAL} weight={700} w={30} size={15} color="#999" lh={20} ml={0.5} mt={4.5}>12-3</Text>
                  <Text font={ARIAL} weight={700} w={384} size={14.5} color="#e4e4e4" lh={20} ml={174} mt={3}>Copyright © Oracle Corporation, 2001. All rights reserved.</Text>
                </SlideFooter>
              </Slide>
            </Canvas>
            <ScrollBar><Chevron up /><ScrollThumb /><Chevron /></ScrollBar>
            <RightPane><TriLeft /></RightPane>
            <Rail>
              <RailSlot $h={51}><RailFind /></RailSlot>
              <RailLine />
              <RailSlot $pt={1}><DocBadge c="#268f83" fill="#cfe6e4" /></RailSlot>
              <RailSlot><Organize /></RailSlot>
              <RailSlot $pt={1}><DocBadge c="#d9434f" fill="#fbd9dc" plus /></RailSlot>
              <RailSlot $pt={1}><RailComment /></RailSlot>
              <RailSlot><Combine /></RailSlot>
              <RailSlot><Compare /></RailSlot>
              <RailSlot><Compress /></RailSlot>
              <RailSlot><Redact /></RailSlot>
              <RailSlot $pt={1}><RailShield /></RailSlot>
              <RailSlot><Prepare /></RailSlot>
              <RailSlot $h={30} $pl={3} $pt={8}><PenTop /></RailSlot>
              <RailSlot $h={16}><Chevron w={14} h={8} sw={3} /></RailSlot>
              <RailSlot $h={7} />
              <RailLine />
              <RailSlot $h={53} $pl={5}><Expand /></RailSlot>
            </Rail>
          </Workspace>

          <InnerTaskbar>
            <InnerStart><Winlogo s={18} /></InnerStart>
            <InnerSearch>
              <SearchGlyph s={18} c="#333" />
              <Text w={144} size={16.5} ml={13.5} mt={1}>Type here to search</Text>
            </InnerSearch>
            <InnerApp><Svg w={18} h={18} stroke="#fff" sw={2.200}><circle cx="9" cy="9" r="7.700" /></Svg></InnerApp>
            <InnerApp><TaskView s={18} /></InnerApp>
            <InnerApp><Edge /></InnerApp>
            <InnerApp><Chrome s={26} /></InnerApp>
            <InnerApp><Folder s={25} /></InnerApp>
            <InnerApp><VsCode /></InnerApp>
            <InnerApp><Cmd /></InnerApp>
            <InnerApp><Notepad /></InnerApp>
            <InnerApp $active><Acrobat /></InnerApp>
            <TrayItem $ml={180} $mt={3}><Sun s={21} id="sunSmall" /></TrayItem>
            <Text w={33.5} size={16} ml={11.500} mt={4}>28°C</Text>
            <TrayItem $ml={20} $mt={3}><Chevron up w={14} h={8} sw={1.500} /></TrayItem>
            <TrayItem $ml={13} $mt={3}><Meet /></TrayItem>
            <TrayItem $ml={13} $mt={3}><Mic h={19} /></TrayItem>
            <TrayItem $ml={13} $mt={3}><BatteryPlug /></TrayItem>
            <TrayItem $ml={11.5} $mt={5}><Wifi s={15} c="#bbb" /></TrayItem>
            <TrayItem $ml={8.5} $mt={3}><Volume /></TrayItem>
            <TwoLines $ml={11.5}><Text w={25.5} size={14.5} lh={19.500}>ENG</Text><Text w={14} size={14.5} lh={19.500}>IN</Text></TwoLines>
            <TwoLines $ml={16}><Text w={31} size={14.5} lh={19.500}>11:04</Text><Text w={65.5} size={14.5} lh={19.500}>10-03-2022</Text></TwoLines>
            <TrayItem $ml={19} $mt={12}><NotifOne /><NotifCount><Text w={6} size={14} lh={17}>1</Text></NotifCount></TrayItem>
            <EndLine $ml={13} />
          </InnerTaskbar>
        </Shared>

        <ParticipantTile>
          <Avatar>
            <Svg w={38} h={44} sw={2.500}><circle cx="19" cy="11" r="9.700" /><path d="M6 25.500h26a4.500 4.500 0 0 1 4.500 4.500c0 8-8 11.500-17.500 11.500S1.500 38 1.500 30A4.500 4.500 0 0 1 6 25.500Z" /></Svg>
          </Avatar>
        </ParticipantTile>
        <Tooltip><Text w={121} size={20}>More actions</Text></Tooltip>
        <NameTag><Text w={231} size={18}>Mohammed Mukthar (Guest)</Text></NameTag>
      </Stage>

      <Taskbar>
        <StartButton><Winlogo s={24} /></StartButton>
        <SearchBox><SearchGlyph s={24} c="#111" /><Text w={196.5} size={22} ml={18} mt={3}>Type here to search</Text></SearchBox>
        <ViewButton><TaskView s={24} /></ViewButton>
        <AppButton $w={62} $ml={9.500}><Chrome s={33} /></AppButton>
        <AppButton $w={61} $ml={14} $running><Folder s={32} /></AppButton>
        <AppButton $w={48} $ml={14.500} $running><TrayItem $ml={13.5} $mt={5}><Outlook /></TrayItem></AppButton>
        <StackedEdge />
        <AppButton $w={61} $ml={13} $running><Globe /></AppButton>
        <AppButton $w={73} $ml={8} $running $active><TeamsIcon /></AppButton>
        <TrayItem $ml={316}><Sun s={28} id="sunBig" /></TrayItem>
        <Text w={44} size={19} ml={15} mt={4}>32°C</Text>
        <Text w={57.5} size={19} ml={13} mt={4}>Sunny</Text>
        <TrayItem $ml={25.5}><Chevron up w={18} h={10} sw={1.500} /></TrayItem>
        <TrayItem $ml={19}><Mic h={24} /></TrayItem>
        <TrayItem $ml={18} $mt={1}><Battery /></TrayItem>
        <TrayItem $ml={16} $mt={3}><Wifi s={18} c="#ccc" /></TrayItem>
        <TwoLines $ml={18}><Text w={34.5} size={18} lh={27.500}>ENG</Text><Text w={21.500} size={18} lh={27.500}>US</Text></TwoLines>
        <TwoLines $ml={20}><Text w={43} size={18} lh={27.500}>11:04</Text><Text w={93} size={18} lh={27.500}>10-03-2022</Text></TwoLines>
        <TrayItem $ml={29}><NotifMoon /></TrayItem>
        <EndLine $ml={29} />
      </Taskbar>
    </Screen>
  );
}
